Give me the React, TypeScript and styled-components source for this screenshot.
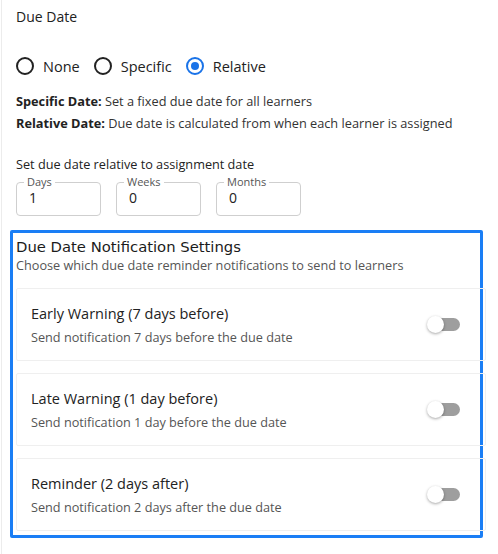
import React, { useState } from "react";
import styled, { createGlobalStyle } from "styled-components";

const Global = createGlobalStyle`
  html, body { margin: 0; padding: 0; background: #fff; }
  body { font-family: "Open Sans", "Liberation Sans", sans-serif; color: #212121; }
  * { box-sizing: border-box; }
`;

const Page = styled.div`
  width: 498px;
  height: 554px;
  padding: 7px 12px 0 14px;
  border-left: 1px solid #ececec;
  margin-left: 1px;
  overflow: hidden;
`;

const Title = styled.div`
  font-size: 14px;
  line-height: 20px;
`;

const RadioRow = styled.div`
  display: flex;
  align-items: center;
  gap: 14px;
  margin-top: 29px;
  height: 20px;
`;

const RadioLabel = styled.label`
  display: flex;
  align-items: center;
  gap: 9px;
  font-size: 14.5px;
  color: #222;
  cursor: pointer;
`;

const Circle = styled.span<{ $on: boolean }>`
  width: 18px;
  height: 18px;
  border-radius: 50%;
  border: 2px solid ${(p) => (p.$on ? "#1a73e8" : "#222")};
  display: flex;
  align-items: center;
  justify-content: center;
  &::after {
    content: "";
    width: 8px;
    height: 8px;
    border-radius: 50%;
    background: ${(p) => (p.$on ? "#1a73e8" : "transparent")};
  }
`;

const Help = styled.div`
  margin-top: 16px;
  display: flex;
  flex-direction: column;
  gap: 4px;
  font-size: 12.75px;
  line-height: 18px;
  color: #333;
  b { font-weight: 700; color: #222; }
`;

const FieldsLabel = styled.div`
  margin-top: 23px;
  font-size: 12.7px;
  line-height: 18px;
  color: #222;
`;

const Fields = styled.div`
  display: flex;
  gap: 15px;
  margin-top: 3px;
`;

const Field = styled.fieldset`
  width: 85px;
  height: 40px;
  margin: 0;
  padding: 0 0 0 12px;
  border: 1px solid #cfcfcf;
  border-radius: 4px;
  font-size: 14px;
  color: #222;
  legend {
    font-size: 11px;
    color: #555;
    padding: 0 3px;
    margin-left: -5px;
    line-height: 12px;
  }
`;

const FieldValue = styled.div`
  line-height: 20px;
`;

const Box = styled.section`
  margin-top: 14px;
  margin-left: -6px;
  width: 473px;
  border: 3px solid #1a7ef5;
  border-radius: 2px;
  padding: 4px 0 4px 3px;
`;

const BoxTitle = styled.div`
  font-family: "DejaVu Sans", sans-serif;
  font-size: 14.8px;
  font-weight: 500;
  line-height: 20px;
  color: #1b1b1b;
`;

const BoxSub = styled.div`
  font-size: 12.7px;
  line-height: 17px;
  color: #555;
`;

const Cards = styled.div`
  display: flex;
  flex-direction: column;
  gap: 12px;
  margin-top: 14px;
  width: 470px;
  margin-right: -6px;
`;

const Card = styled.div`
  display: flex;
  align-items: center;
  justify-content: space-between;
  height: 73px;
  padding: 0 25px 0 14px;
  border: 1px solid #efefef;
  border-radius: 2px;
`;

const CardText = styled.div`
  display: flex;
  flex-direction: column;
  gap: 4px;
`;

const CardTitle = styled.div`
  font-size: 14.5px;
  line-height: 20px;
  color: #222;
`;

const CardSub = styled.div`
  font-size: 12.7px;
  line-height: 18px;
  color: #555;
`;

const Switch = styled.button`
  position: relative;
  width: 33px;
  height: 16px;
  border: 0;
  padding: 0;
  background: none;
  &::before {
    content: "";
    position: absolute;
    left: 3px;
    right: 0;
    top: 1px;
    height: 13px;
    border-radius: 7px;
    background: #9e9e9e;
  }
  &::after {
    content: "";
    position: absolute;
    left: 0;
    top: -1px;
    width: 17px;
    height: 17px;
    border-radius: 50%;
    background: #fff;
    box-shadow: 0 1px 3px rgba(0, 0, 0, 0.35);
  }
`;

const options = ["None", "Specific", "Relative"];
const fields = [
  { label: "Days", value: "1" },
  { label: "Weeks", value: "0" },
  { label: "Months", value: "0" },
];
const notices = [
  { title: "Early Warning (7 days before)", sub: "Send notification 7 days before the due date" },
  { title: "Late Warning (1 day before)", sub: "Send notification 1 day before the due date" },
  { title: "Reminder (2 days after)", sub: "Send notification 2 days after the due date" },
];

export default function App() {
  const [mode, setMode] = useState("Relative");
  return (
    <>
      <Global />
      <Page>
        <Title>Due Date</Title>
        <RadioRow>
          {options.map((o) => (
            <RadioLabel key={o} onClick={() => setMode(o)}>
              <Circle $on={mode === o} />
              {o}
            </RadioLabel>
          ))}
        </RadioRow>
        <Help>
          <div><b>Specific Date:</b> Set a fixed due date for all learners</div>
          <div><b>Relative Date:</b> Due date is calculated from when each learner is assigned</div>
        </Help>
        <FieldsLabel>Set due date relative to assignment date</FieldsLabel>
        <Fields>
          {fields.map((f) => (
            <Field key={f.label}>
              <legend>{f.label}</legend>
              <FieldValue>{f.value}</FieldValue>
            </Field>
          ))}
        </Fields>
        <Box>
          <BoxTitle>Due Date Notification Settings</BoxTitle>
          <BoxSub>Choose which due date reminder notifications to send to learners</BoxSub>
          <Cards>
            {notices.map((n) => (
              <Card key={n.title}>
                <CardText>
                  <CardTitle>{n.title}</CardTitle>
                  <CardSub>{n.sub}</CardSub>
                </CardText>
                <Switch aria-label={n.title} />
              </Card>
            ))}
          </Cards>
        </Box>
      </Page>
    </>
  );
}
